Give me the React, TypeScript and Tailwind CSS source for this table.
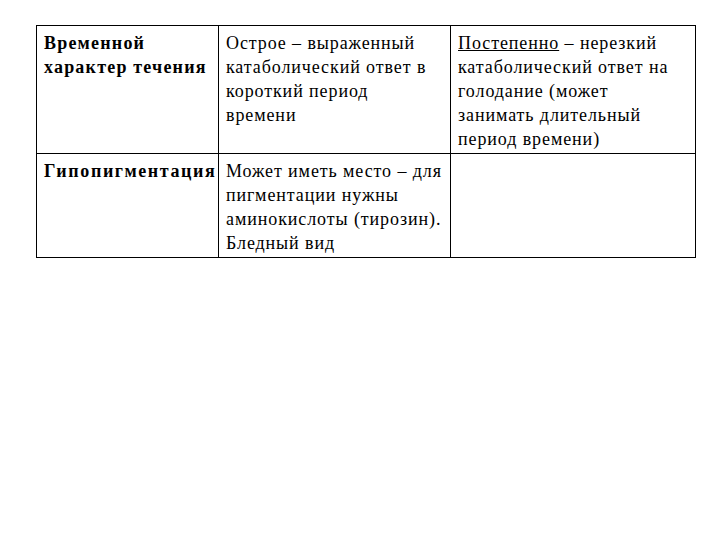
export default function App() {
  const cell = 'border border-black align-top pl-[7px] pr-[2px] pt-[5px] pb-[2px] whitespace-nowrap'

  return (
    <div className="w-[720px] h-[540px] bg-white pt-[25px] pl-[36px] font-['Liberation_Serif',serif] text-[18px] leading-[24px] tracking-[0.9px] text-black">
      <table className="table-fixed border-collapse w-[659px]">
        <colgroup>
          <col className="w-[182px]" />
          <col className="w-[232px]" />
          <col className="w-[245px]" />
        </colgroup>
        <tbody>
          <tr className="h-[128px]">
            <td className={`${cell} font-bold tracking-[1.2px]`}>
              Временной
              <br />
              характер течения
            </td>
            <td className={cell}>
              Острое – выраженный
              <br />
              катаболический ответ в
              <br />
              короткий период
              <br />
              времени
            </td>
            <td className={cell}>
              <span className="underline">Постепенно</span> – нерезкий
              <br />
              катаболический ответ на
              <br />
              голодание (может
              <br />
              занимать длительный
              <br />
              период времени)
            </td>
          </tr>
          <tr className="h-[103px]">
            <td className={`${cell} font-bold tracking-[1.6px]`}>Гипопигментация</td>
            <td className={cell}>
              Может иметь место – для
              <br />
              пигментации нужны
              <br />
              аминокислоты (тирозин).
              <br />
              Бледный вид
            </td>
            <td className={cell}></td>
          </tr>
        </tbody>
      </table>
    </div>
  )
}
